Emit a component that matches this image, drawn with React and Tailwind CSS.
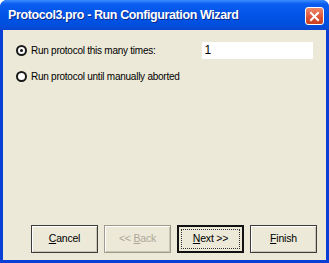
const Radio = ({ checked }) => (
  <span className="w-[11px] h-[11px] rounded-full border-[2px] border-[#1a1a1a] bg-white flex items-center justify-center shrink-0">
    {checked && <span className="w-[3px] h-[3px] rounded-full bg-[#1a1a1a]" />}
  </span>
);

const WizButton = ({ children, variant }) => {
  if (variant === 'default') {
    return (
      <button className="w-[67px] h-[28px] border-2 border-[#111] bg-[#ECE9D8] p-[2px] flex">
        <span className="flex-1 border border-dotted border-[#333] flex items-center justify-center text-[10.5px] tracking-[-0.2px] text-black">
          {children}
        </span>
      </button>
    );
  }
  const disabled = variant === 'disabled';
  return (
    <button
      className={`w-[67px] h-[28px] border flex items-center justify-center text-[10.5px] tracking-[-0.2px] bg-[#ECE9D8] shadow-[inset_1px_1px_0_#fff,inset_-1px_-1px_0_#c9c5b3] ${
        disabled ? 'border-[#9e9b8c] text-[#ACA899]' : 'border-[#3c3c3c] text-black'
      }`}
    >
      {children}
    </button>
  );
};

export default function App() {
  return (
    <div className="w-[329px] h-[263px] bg-white font-['Liberation_Sans',Arial,sans-serif]">
      <div className="w-full h-full rounded-t-[7px] bg-[#0A3FD6] flex flex-col overflow-hidden">
        {/* Title bar */}
        <div className="h-[30px] shrink-0 flex items-center justify-between pl-[8px] pr-[5px] bg-[linear-gradient(to_bottom,#3D8DFF_0px,#0A5DF0_4px,#0054E6_14px,#0050E0_24px,#0A46D0_30px)]">
          <span className="text-white font-bold text-[12.5px] tracking-[-0.4px] [text-shadow:1px_1px_0_#0a2a8a] mt-[1px]">
            Protocol3.pro - Run Configuration Wizard
          </span>
          <div className="w-[19px] h-[18px] mt-[2px] rounded-[3px] border border-white bg-[linear-gradient(to_bottom,#EE8A6A,#E0553A_55%,#C8401F)] flex items-center justify-center">
            <svg width="11" height="11" viewBox="0 0 11 11">
              <path d="M2 2 L9 9 M9 2 L2 9" stroke="white" strokeWidth="2" strokeLinecap="square" />
            </svg>
          </div>
        </div>

        {/* Body */}
        <div className="flex-1 mx-[3px] mb-[3px] bg-[#ECE9D8] flex flex-col text-[10px] tracking-[-0.25px] text-black">
          <div className="pt-[11px] pl-[13px] pr-[13px] flex flex-col gap-[8px]">
            <div className="flex items-center h-[18px]">
              <Radio checked />
              <span className="ml-[4px] w-[172px]">Run protocol this many times:</span>
              <div className="w-[111px] h-[17px] bg-white pl-[2px] flex items-center text-[12px] tracking-normal">1</div>
            </div>
            <div className="flex items-center h-[18px]">
              <Radio />
              <span className="ml-[4px]">Run protocol until manually aborted</span>
            </div>
          </div>

          <div className="mt-auto mb-[7px] flex gap-[6px] pl-[28px]">
            <WizButton>
              <span><u>C</u>ancel</span>
            </WizButton>
            <WizButton variant="disabled">
              <span>&lt;&lt; <u>B</u>ack</span>
            </WizButton>
            <WizButton variant="default">
              <span><u>N</u>ext &gt;&gt;</span>
            </WizButton>
            <WizButton>
              <span><u>F</u>inish</span>
            </WizButton>
          </div>
        </div>
      </div>
    </div>
  );
}
